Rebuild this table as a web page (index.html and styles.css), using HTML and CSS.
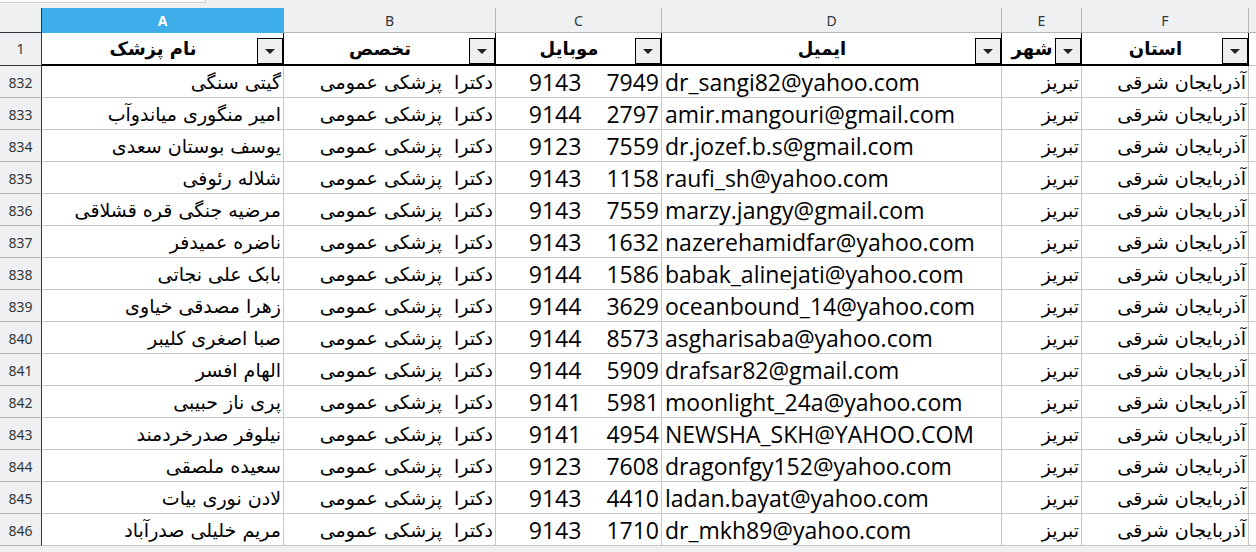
FILE: index.html
```html
<!DOCTYPE html>
<html lang="fa">
<head>
<meta charset="utf-8">
<title>Sheet</title>
<link rel="stylesheet" href="styles.css">
</head>
<body>
<div class="topbar"><div class="tab"></div></div>
<div class="sheet">
  <div class="row colhead">
    <div class="corner"></div>
    <div class="ch sel">A</div>
    <div class="ch">B</div>
    <div class="ch">C</div>
    <div class="ch">D</div>
    <div class="ch">E</div>
    <div class="ch">F</div>
    <div class="ch last"></div>
  </div>
  <div class="row hrow">
    <div class="rh">1</div>
    <div class="hc"><span class="ht">نام پزشک</span><span class="dd"><i></i></span></div>
    <div class="hc"><span class="ht">تخصص</span><span class="dd"><i></i></span></div>
    <div class="hc"><span class="ht">موبایل</span><span class="dd"><i></i></span></div>
    <div class="hc"><span class="ht">ایمیل</span><span class="dd"><i></i></span></div>
    <div class="hc"><span class="ht">شهر</span><span class="dd"><i></i></span></div>
    <div class="hc"><span class="ht">استان</span><span class="dd"><i></i></span></div>
    <div class="hc empty"></div>
  </div>

  <div class="row drow"><div class="rh">832</div><div class="c fa">گیتی سنگی</div><div class="c fa">دکترا  پزشکی عمومی</div><div class="c ph"><span>9143</span><span>7949</span></div><div class="c em">dr_sangi82@yahoo.com</div><div class="c fa">تبریز</div><div class="c fa">آذربایجان شرقی</div><div class="c"></div></div>
  <div class="row drow"><div class="rh">833</div><div class="c fa">امیر منگوری میاندوآب</div><div class="c fa">دکترا  پزشکی عمومی</div><div class="c ph"><span>9144</span><span>2797</span></div><div class="c em">amir.mangouri@gmail.com</div><div class="c fa">تبریز</div><div class="c fa">آذربایجان شرقی</div><div class="c"></div></div>
  <div class="row drow"><div class="rh">834</div><div class="c fa">یوسف بوستان سعدی</div><div class="c fa">دکترا  پزشکی عمومی</div><div class="c ph"><span>9123</span><span>7559</span></div><div class="c em">dr.jozef.b.s@gmail.com</div><div class="c fa">تبریز</div><div class="c fa">آذربایجان شرقی</div><div class="c"></div></div>
  <div class="row drow"><div class="rh">835</div><div class="c fa">شلاله رئوفی</div><div class="c fa">دکترا  پزشکی عمومی</div><div class="c ph"><span>9143</span><span>1158</span></div><div class="c em">raufi_sh@yahoo.com</div><div class="c fa">تبریز</div><div class="c fa">آذربایجان شرقی</div><div class="c"></div></div>
  <div class="row drow"><div class="rh">836</div><div class="c fa">مرضیه جنگی قره قشلاقی</div><div class="c fa">دکترا  پزشکی عمومی</div><div class="c ph"><span>9143</span><span>7559</span></div><div class="c em">marzy.jangy@gmail.com</div><div class="c fa">تبریز</div><div class="c fa">آذربایجان شرقی</div><div class="c"></div></div>
  <div class="row drow"><div class="rh">837</div><div class="c fa">ناضره عمیدفر</div><div class="c fa">دکترا  پزشکی عمومی</div><div class="c ph"><span>9143</span><span>1632</span></div><div class="c em">nazerehamidfar@yahoo.com</div><div class="c fa">تبریز</div><div class="c fa">آذربایجان شرقی</div><div class="c"></div></div>
  <div class="row drow"><div class="rh">838</div><div class="c fa">بابک علی نجاتی</div><div class="c fa">دکترا  پزشکی عمومی</div><div class="c ph"><span>9144</span><span>1586</span></div><div class="c em">babak_alinejati@yahoo.com</div><div class="c fa">تبریز</div><div class="c fa">آذربایجان شرقی</div><div class="c"></div></div>
  <div class="row drow"><div class="rh">839</div><div class="c fa">زهرا مصدقی خیاوی</div><div class="c fa">دکترا  پزشکی عمومی</div><div class="c ph"><span>9144</span><span>3629</span></div><div class="c em">oceanbound_14@yahoo.com</div><div class="c fa">تبریز</div><div class="c fa">آذربایجان شرقی</div><div class="c"></div></div>
  <div class="row drow"><div class="rh">840</div><div class="c fa">صبا اصغری کلیبر</div><div class="c fa">دکترا  پزشکی عمومی</div><div class="c ph"><span>9144</span><span>8573</span></div><div class="c em">asgharisaba@yahoo.com</div><div class="c fa">تبریز</div><div class="c fa">آذربایجان شرقی</div><div class="c"></div></div>
  <div class="row drow"><div class="rh">841</div><div class="c fa">الهام افسر</div><div class="c fa">دکترا  پزشکی عمومی</div><div class="c ph"><span>9144</span><span>5909</span></div><div class="c em">drafsar82@gmail.com</div><div class="c fa">تبریز</div><div class="c fa">آذربایجان شرقی</div><div class="c"></div></div>
  <div class="row drow"><div class="rh">842</div><div class="c fa">پری ناز حبیبی</div><div class="c fa">دکترا  پزشکی عمومی</div><div class="c ph"><span>9141</span><span>5981</span></div><div class="c em">moonlight_24a@yahoo.com</div><div class="c fa">تبریز</div><div class="c fa">آذربایجان شرقی</div><div class="c"></div></div>
  <div class="row drow"><div class="rh">843</div><div class="c fa">نیلوفر صدرخردمند</div><div class="c fa">دکترا  پزشکی عمومی</div><div class="c ph"><span>9141</span><span>4954</span></div><div class="c em">NEWSHA_SKH@YAHOO.COM</div><div class="c fa">تبریز</div><div class="c fa">آذربایجان شرقی</div><div class="c"></div></div>
  <div class="row drow"><div class="rh">844</div><div class="c fa">سعیده ملصقی</div><div class="c fa">دکترا  پزشکی عمومی</div><div class="c ph"><span>9123</span><span>7608</span></div><div class="c em">dragonfgy152@yahoo.com</div><div class="c fa">تبریز</div><div class="c fa">آذربایجان شرقی</div><div class="c"></div></div>
  <div class="row drow"><div class="rh">845</div><div class="c fa">لادن نوری بیات</div><div class="c fa">دکترا  پزشکی عمومی</div><div class="c ph"><span>9143</span><span>4410</span></div><div class="c em">ladan.bayat@yahoo.com</div><div class="c fa">تبریز</div><div class="c fa">آذربایجان شرقی</div><div class="c"></div></div>
  <div class="row drow"><div class="rh">846</div><div class="c fa">مریم خلیلی صدرآباد</div><div class="c fa">دکترا  پزشکی عمومی</div><div class="c ph"><span>9143</span><span>1710</span></div><div class="c em">dr_mkh89@yahoo.com</div><div class="c fa">تبریز</div><div class="c fa">آذربایجان شرقی</div><div class="c"></div></div>
</div>
</body>
</html>
```
FILE: styles.css
```css
* { box-sizing: border-box; }
html, body {
  margin: 0;
  padding: 0;
}
body {
  width: 1256px;
  height: 552px;
  overflow: hidden;
  background: #eff0f1;
  font-family: "DejaVu Sans", sans-serif;
  color: #000;
}
.topbar {
  height: 8px;
}
.tab {
  width: 206px;
  height: 3px;
  background: #fbfbfb;
  border-bottom: 1px solid #cdd0d2;
  border-right: 1px solid #cdd0d2;
}
.sheet {
  display: flex;
  flex-direction: column;
}
.row {
  display: grid;
  grid-template-columns: 42px 242px 212px 166px 340px 80px 167px 1fr;
}

/* column header */
.colhead {
  height: 25px;
  font-family: "Noto Sans", sans-serif;
  font-size: 14px;
  color: #31363b;
}
.corner {
  border-right: 1px solid #31363b;
  border-bottom: 1px solid #31363b;
}
.ch {
  display: flex;
  align-items: center;
  justify-content: center;
  border-right: 1px solid #b4b6b8;
  border-bottom: 1px solid #b4b6b8;
}
.ch.sel {
  background: #3daee9;
  color: #fff;
  font-weight: bold;
  border-right-color: #3daee9;
  border-bottom-color: #3daee9;
}
.ch.last { border-right: none; }

/* row header cells */
.rh {
  display: flex;
  align-items: center;
  justify-content: center;
  background: #eff0f1;
  border-right: 1px solid #31363b;
  border-bottom: 1px solid #b4b6b8;
  font-family: "Noto Sans", sans-serif;
  font-size: 14px;
  color: #31363b;
  padding-top: 1px;
}

/* header row 1 */
.hrow {
  height: 33px;
}
.hrow .rh {
  border-bottom: 1px solid #31363b;
  padding-bottom: 2px;
}
.hc {
  display: flex;
  align-items: flex-end;
  background: #fff;
  border-right: 1px solid #000;
  border-bottom: 2px solid #000;
}
.hc.empty {
  border-right: none;
  border-bottom: 1px solid #c6c6c6;
}
.ht {
  flex: 1;
  align-self: center;
  text-align: center;
  direction: rtl;
  padding-left: 7px;
  font-weight: bold;
  font-size: 18px;
  white-space: nowrap;
  line-height: 30px;
}
.dd {
  width: 26px;
  height: 26px;
  flex: none;
  display: flex;
  align-items: center;
  justify-content: center;
  background: #efefef;
  border: 1px solid #000;
}
.dd i {
  display: block;
  width: 0;
  height: 0;
  border-left: 5px solid transparent;
  border-right: 5px solid transparent;
  border-top: 5px solid #222;
  margin-top: 1px;
}

/* data rows */
.drow {
  height: 32px;
}
.c {
  display: flex;
  align-items: center;
  background: #fff;
  border-right: 1px solid #c6c6c6;
  border-bottom: 1px solid #c6c6c6;
  white-space: pre;
  overflow: hidden;
}
.drow .c:last-child { border-right: none; }
.fa {
  direction: rtl;
  justify-content: flex-start;
  padding-right: 2px;
  font-size: 19px;
}
.ph {
  justify-content: flex-end;
  gap: 25px;
  padding-right: 2px;
  font-family: "Open Sans", "Noto Sans", sans-serif;
  font-size: 23px;
}
.em {
  padding-left: 3px;
  font-family: "Open Sans", "Noto Sans", sans-serif;
  font-size: 23px;
}
```
